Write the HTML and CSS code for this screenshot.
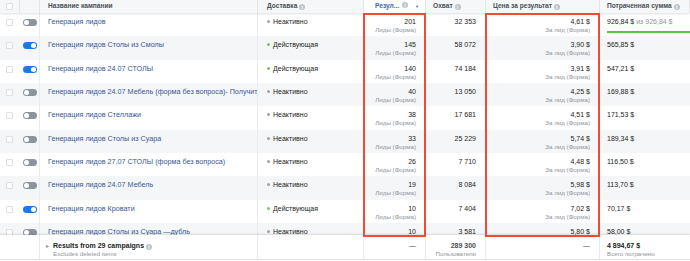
FILE: index.html
```html
<!DOCTYPE html>
<html lang="ru">
<head>
    <meta charset="UTF-8">
    <title>Кампании</title>
    <link rel="stylesheet" href="styles.css">
</head>
<body>
    <div class="table">
        <div class="row head">
            <div class="c cb"><span class="box"></span></div>
            <div class="c tg"></div>
            <div class="c name">Название кампании</div>
            <div class="c dl">Доставка <span class="info">i</span></div>
            <div class="c res sorted">Резул... <span class="info">i</span><span class="caret">▼</span></div>
            <div class="c reach">Охват <span class="info">i</span></div>
            <div class="c cost">Цена за результат <span class="info">i</span></div>
            <div class="c spent">Потраченная сумма <span class="info">i</span></div>
        </div>

        <div class="body">
            <div class="row">
                <div class="c cb"><span class="box"></span></div>
                <div class="c tg"><span class="sw"></span></div>
                <div class="c name"><a>Генерация лидов</a></div>
                <div class="c dl"><span class="dot"></span>Неактивно</div>
                <div class="c res num">201<small>Лиды (Форма)</small></div>
                <div class="c reach num">32 353</div>
                <div class="c cost num">4,61 $<small>За лид (Форма)</small></div>
                <div class="c spent">926,84 $ <span class="muted">из 926,84 $</span><div class="bar"></div></div>
            </div>
            <div class="row">
                <div class="c cb"><span class="box"></span></div>
                <div class="c tg"><span class="sw on"></span></div>
                <div class="c name"><a>Генерация лидов Столы из Смолы</a></div>
                <div class="c dl"><span class="dot on"></span>Действующая</div>
                <div class="c res num">145<small>Лиды (Форма)</small></div>
                <div class="c reach num">58 072</div>
                <div class="c cost num">3,90 $<small>За лид (Форма)</small></div>
                <div class="c spent">565,85 $</div>
            </div>
            <div class="row">
                <div class="c cb"><span class="box"></span></div>
                <div class="c tg"><span class="sw on"></span></div>
                <div class="c name"><a>Генерация лидов 24.07 СТОЛЫ</a></div>
                <div class="c dl"><span class="dot on"></span>Действующая</div>
                <div class="c res num">140<small>Лиды (Форма)</small></div>
                <div class="c reach num">74 184</div>
                <div class="c cost num">3,91 $<small>За лид (Форма)</small></div>
                <div class="c spent">547,21 $</div>
            </div>
            <div class="row">
                <div class="c cb"><span class="box"></span></div>
                <div class="c tg"><span class="sw"></span></div>
                <div class="c name"><a>Генерация лидов 24.07 Мебель (форма без вопроса)- Получить предл</a></div>
                <div class="c dl"><span class="dot"></span>Неактивно</div>
                <div class="c res num">40<small>Лиды (Форма)</small></div>
                <div class="c reach num">13 050</div>
                <div class="c cost num">4,25 $<small>За лид (Форма)</small></div>
                <div class="c spent">169,88 $</div>
            </div>
            <div class="row">
                <div class="c cb"><span class="box"></span></div>
                <div class="c tg"><span class="sw"></span></div>
                <div class="c name"><a>Генерация лидов Стеллажи</a></div>
                <div class="c dl"><span class="dot"></span>Неактивно</div>
                <div class="c res num">38<small>Лиды (Форма)</small></div>
                <div class="c reach num">17 681</div>
                <div class="c cost num">4,51 $<small>За лид (Форма)</small></div>
                <div class="c spent">171,53 $</div>
            </div>
            <div class="row">
                <div class="c cb"><span class="box"></span></div>
                <div class="c tg"><span class="sw"></span></div>
                <div class="c name"><a>Генерация лидов Столы из Суара</a></div>
                <div class="c dl"><span class="dot"></span>Неактивно</div>
                <div class="c res num">33<small>Лиды (Форма)</small></div>
                <div class="c reach num">25 229</div>
                <div class="c cost num">5,74 $<small>За лид (Форма)</small></div>
                <div class="c spent">189,34 $</div>
            </div>
            <div class="row">
                <div class="c cb"><span class="box"></span></div>
                <div class="c tg"><span class="sw"></span></div>
                <div class="c name"><a>Генерация лидов 27.07 СТОЛЫ (форма без вопроса)</a></div>
                <div class="c dl"><span class="dot"></span>Неактивно</div>
                <div class="c res num">26<small>Лиды (Форма)</small></div>
                <div class="c reach num">7 710</div>
                <div class="c cost num">4,48 $<small>За лид (Форма)</small></div>
                <div class="c spent">116,50 $</div>
            </div>
            <div class="row">
                <div class="c cb"><span class="box"></span></div>
                <div class="c tg"><span class="sw"></span></div>
                <div class="c name"><a>Генерация лидов 24.07 Мебель</a></div>
                <div class="c dl"><span class="dot"></span>Неактивно</div>
                <div class="c res num">19<small>Лиды (Форма)</small></div>
                <div class="c reach num">8 084</div>
                <div class="c cost num">5,98 $<small>За лид (Форма)</small></div>
                <div class="c spent">113,70 $</div>
            </div>
            <div class="row">
                <div class="c cb"><span class="box"></span></div>
                <div class="c tg"><span class="sw on"></span></div>
                <div class="c name"><a>Генерация лидов Кровати</a></div>
                <div class="c dl"><span class="dot on"></span>Действующая</div>
                <div class="c res num">10<small>Лиды (Форма)</small></div>
                <div class="c reach num">7 404</div>
                <div class="c cost num">7,02 $<small>За лид (Форма)</small></div>
                <div class="c spent">70,17 $</div>
            </div>
            <div class="row">
                <div class="c cb"><span class="box"></span></div>
                <div class="c tg"><span class="sw"></span></div>
                <div class="c name"><a>Генерация лидов Столы из Суара —дубль</a></div>
                <div class="c dl"><span class="dot"></span>Неактивно</div>
                <div class="c res num">10<small>Лиды (Форма)</small></div>
                <div class="c reach num">3 581</div>
                <div class="c cost num">5,80 $<small>За лид (Форма)</small></div>
                <div class="c spent">58,00 $</div>
            </div>
        </div>

        <div class="row foot">
            <div class="c cb"></div>
            <div class="c tg"></div>
            <div class="c name"><span class="arrow">▸</span><b>Results from 29 campaigns</b> <span class="info">i</span><small>Excludes deleted items</small></div>
            <div class="c dl"></div>
            <div class="c res num">—</div>
            <div class="c reach num"><b>289 300</b><small>Пользователи</small></div>
            <div class="c cost num">—</div>
            <div class="c spent"><b>4 894,67 $</b><small>Всего потрачено</small></div>
        </div>

        <div class="mark mark-res"></div>
        <div class="mark mark-cost"></div>
    </div>
</body>
</html>
```

FILE: styles.css
```css
body {
    margin: 0;
    background: #fff;
    font-family: "Liberation Sans", Arial, sans-serif;
    color: #1c1e21;
    overflow: hidden;
}

.table {
    position: relative;
    width: 690px;
}

.row {
    display: grid;
    grid-template-columns: 20px 20px 218px 106px 62px 60px 114px 90px;
    height: 23.33px;
    font-size: 7px;
    line-height: 8px;
}

.row:nth-child(even) {
    background: #f5f6f7;
}

.c {
    border-right: 1px solid #e9ebee;
    padding-top: 5px;
    white-space: nowrap;
    overflow: hidden;
    text-overflow: clip;
}

.c:last-child {
    border-right: none;
}

.cb {
    border-right: none;
}

/* header */
.head {
    height: 13px;
    background: #f6f7f9;
    font-weight: bold;
    color: #4b4f56;
    font-size: 6.6px;
    box-shadow: 0 1px 2px rgba(0, 0, 0, 0.12);
    position: relative;
    z-index: 1;
}

.head .c {
    padding-top: 2px;
    border-right: 1px solid #e3e5e8;
}

.head .cb {
    border-right: 1px solid #e3e5e8;
}

.head .sorted {
    background: #fff;
    color: #4267b2;
    padding-left: 11px;
    display: flex;
    align-items: flex-start;
    gap: 3px;
}

.head .reach,
.head .cost,
.head .spent {
    padding-left: 7px;
}

.caret {
    font-size: 4px;
    margin-left: auto;
    margin-right: 6px;
    margin-top: 1px;
}

.info {
    display: inline-block;
    width: 6px;
    height: 6px;
    border-radius: 50%;
    background: #bec3c9;
    color: #fff;
    font-size: 5px;
    line-height: 6px;
    text-align: center;
    font-weight: bold;
    vertical-align: -1px;
}

/* body */
.body {
    height: 222px;
    overflow: hidden;
}

.box {
    display: block;
    width: 7px;
    height: 7px;
    margin: 1px 0 0 6px;
    border: 1px solid #dddfe2;
    border-radius: 1px;
    background: #fff;
    box-sizing: border-box;
}

.head .box {
    margin-top: 1px;
}

.sw {
    display: block;
    position: relative;
    width: 14px;
    height: 7px;
    margin: 1px 0 0 3px;
    border-radius: 4px;
    background: #8d949e;
}

.sw::after {
    content: "";
    position: absolute;
    top: 1px;
    left: 1px;
    width: 5px;
    height: 5px;
    border-radius: 50%;
    background: #fff;
}

.sw.on {
    background: #1877f2;
}

.sw.on::after {
    left: 8px;
}

.name {
    padding-left: 8px;
}

.name a {
    color: #385898;
    font-size: 7.2px;
}

.dl {
    padding-left: 9px;
}

.dot {
    display: inline-block;
    width: 3px;
    height: 3px;
    border-radius: 50%;
    background: #9ea3aa;
    margin-right: 3px;
    vertical-align: 1px;
}

.dot.on {
    background: #7cc36a;
}

.num {
    text-align: right;
    padding-right: 9px;
}

.num small,
.foot small {
    display: block;
    font-size: 6.2px;
    color: #90949c;
}

.spent {
    padding-left: 7px;
}

.muted {
    color: #90949c;
}

.bar {
    height: 2px;
    background: #5ac44a;
    margin-top: 5px;
}

/* footer */
.foot {
    height: 24px;
    background: #fff;
    border-bottom: 1px solid #dddfe2;
    box-shadow: 0 -1px 2px rgba(0, 0, 0, 0.12);
    position: relative;
    z-index: 1;
}

.foot .c {
    padding-top: 7px;
}

.foot .cb {
    border-right: none;
}

.foot .tg {
    border-right: 1px solid #e9ebee;
}

.foot .name {
    padding-left: 6px;
}

.foot .name small {
    padding-left: 7px;
}

.arrow {
    color: #90949c;
    font-size: 6px;
    display: inline-block;
    width: 7px;
}

.foot .num {
    color: #4b4f56;
}

/* annotations */
.mark {
    position: absolute;
    top: 13px;
    height: 224px;
    border: 2px solid #ef4b35;
    box-sizing: border-box;
    z-index: 2;
}

.mark-res {
    left: 363px;
    width: 63px;
}

.mark-cost {
    left: 485px;
    width: 115px;
}
```
